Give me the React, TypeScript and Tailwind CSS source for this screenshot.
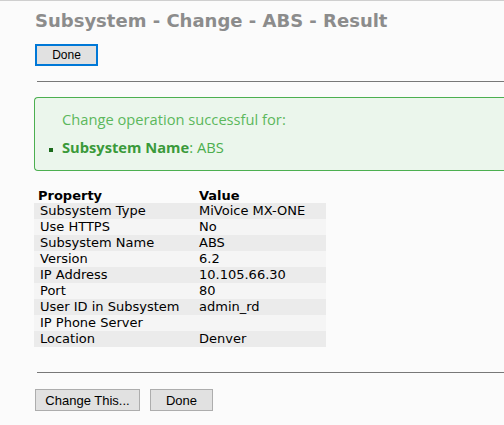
import React from 'react'

const rows: [string, string][] = [
    ['Subsystem Type', 'MiVoice MX-ONE'],
    ['Use HTTPS', 'No'],
    ['Subsystem Name', 'ABS'],
    ['Version', '6.2'],
    ['IP Address', '10.105.66.30'],
    ['Port', '80'],
    ['User ID in Subsystem', 'admin_rd'],
    ['IP Phone Server', ''],
    ['Location', 'Denver'],
]

export default function App() {
    return (
        <main className="w-[504px] h-[425px] overflow-hidden bg-[#fbfbfb] border-t border-[#cfcfcf] font-['DejaVu_Sans',sans-serif]">
            <div className="pl-[35px]">
                {/* Title */}
                <h1 className="mt-[8px] h-[24px] text-[18px] leading-[24px] font-bold text-[#8c8c8c] whitespace-nowrap">
                    Subsystem - Change - ABS - Result
                </h1>
                <button className="mt-[11px] w-[63px] h-[22px] bg-[#e1e1e1] border-2 border-[#0078d7] text-[12px] text-black font-['Liberation_Sans',sans-serif] leading-none">
                    Done
                </button>
                <div className="mt-[15px] ml-[2px] h-px bg-[#787878]" />

                {/* Result message */}
                <div className="mt-[15px] -ml-[1px] h-[74px] border border-[#4caf50] rounded-l-[4px] border-r-0 bg-[#ebf6ec] font-['Open_Sans',sans-serif]">
                    <p className="mt-[11px] ml-[27px] text-[14.7px] leading-[20px] text-[#5cb85c]">Change operation successful for:</p>
                    <div className="mt-[8px] flex items-center">
                        <span className="ml-[14px] mt-[6px] w-[4px] h-[4px] bg-[#1c6b1c]" />
                        <span className="ml-[9px] text-[14.7px] leading-[20px] text-[#4cae4c]">
                            <b className="text-[#3a9a3a]">Subsystem Name</b>: ABS
                        </span>
                    </div>
                </div>

                {/* Properties */}
                <table className="mt-[18px] -ml-[1px] w-[292px] text-[13px] leading-[16px] text-black border-collapse">
                    <thead>
                        <tr>
                            <th className="text-left font-bold pl-[4px] w-[162px] h-[14px] leading-[12px]">Property</th>
                            <th className="text-left font-bold pl-[3px] h-[14px] leading-[12px]">Value</th>
                        </tr>
                    </thead>
                    <tbody>
                        {rows.map(([k, v], i) => (
                            <tr key={k} className={i % 2 === 0 ? 'bg-[#ebebeb]' : 'bg-[#f5f5f5]'}>
                                <td className="pl-[6px] h-[16px] whitespace-nowrap">{k}</td>
                                <td className="pl-[3px] h-[16px] whitespace-nowrap">{v}</td>
                            </tr>
                        ))}
                    </tbody>
                </table>

                <div className="mt-[25px] ml-[2px] h-px bg-[#787878]" />
                <div className="mt-[16px] flex gap-[10px] font-['Liberation_Sans',sans-serif] text-[13px] text-black">
                    <button className="w-[105px] h-[22px] bg-[#e1e1e1] border border-[#adadad] leading-none">Change This...</button>
                    <button className="w-[63px] h-[22px] bg-[#e1e1e1] border border-[#adadad] leading-none">Done</button>
                </div>
            </div>
        </main>
    )
}
